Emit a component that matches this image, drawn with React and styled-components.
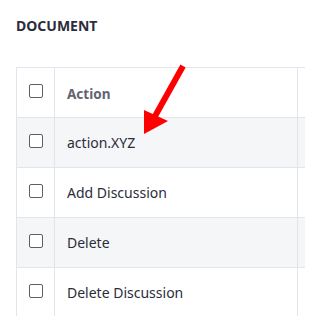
import React from "react";
import styled, { createGlobalStyle } from "styled-components";

const GlobalStyle = createGlobalStyle`
  html, body {
    margin: 0;
    padding: 0;
    background: #fff;
    overflow: hidden;
  }
  body {
    font-family: "Noto Sans", "Open Sans", sans-serif;
    color: #2b2d3a;
  }
`;

const Page = styled.div`
  position: relative;
  width: 305px;
  height: 316px;
  padding: 16px 0 0 16px;
  box-sizing: border-box;
  overflow: hidden;
`;

const Title = styled.h2`
  margin: 0 0 32px;
  font-size: 14px;
  line-height: 19px;
  font-weight: 700;
  color: #2b2d3a;
`;

const Table = styled.table`
  border-collapse: collapse;
  width: 420px;
  table-layout: fixed;
`;

const Row = styled.tr`
  height: 50px;
  background: ${(p) => (p.$striped ? "#f5f6f8" : "#fff")};
`;

const CheckCell = styled.td`
  width: 38px;
  padding: 13px 0 0;
  vertical-align: top;
  text-align: center;
  border: 1px solid #e4e4ec;
  box-sizing: border-box;
`;

const TextCell = styled.td`
  width: 243px;
  padding: 0 12px;
  vertical-align: middle;
  font-size: 14px;
  color: #2b2d3a;
  border: 1px solid #e4e4ec;
  box-sizing: border-box;
  white-space: nowrap;
`;

const HeadCell = styled(TextCell)`
  font-weight: 700;
  font-size: 13.5px;
  color: #62646f;
  padding-top: 3px;
`;

const EmptyCell = styled.td`
  border: 1px solid #e4e4ec;
`;

const Box = styled.span`
  display: inline-block;
  width: 12px;
  height: 12px;
  border: 1px solid #5f5f66;
  border-radius: 2px;
  background: #fff;
`;

const Arrow = styled.svg`
  position: absolute;
  left: 0;
  top: 0;
  pointer-events: none;
`;

const rows = ["action.XYZ", "Add Discussion", "Delete", "Delete Discussion"];

export default function App() {
  return (
    <>
      <GlobalStyle />
      <Page>
        <Title>DOCUMENT</Title>
        <Table>
          <tbody>
            <Row>
              <CheckCell>
                <Box />
              </CheckCell>
              <HeadCell>Action</HeadCell>
              <EmptyCell />
            </Row>
            {rows.map((label, i) => (
              <Row key={label} $striped={i % 2 === 0}>
                <CheckCell>
                  <Box />
                </CheckCell>
                <TextCell>{label}</TextCell>
                <EmptyCell />
              </Row>
            ))}
          </tbody>
        </Table>
        <Arrow width="305" height="316" viewBox="0 0 305 316">
          <line x1="183" y1="66" x2="154" y2="118" stroke="#ff0000" strokeWidth="6" />
          <polygon points="144,134 144,110 168,121" fill="#ff0000" />
        </Arrow>
      </Page>
    </>
  );
}
